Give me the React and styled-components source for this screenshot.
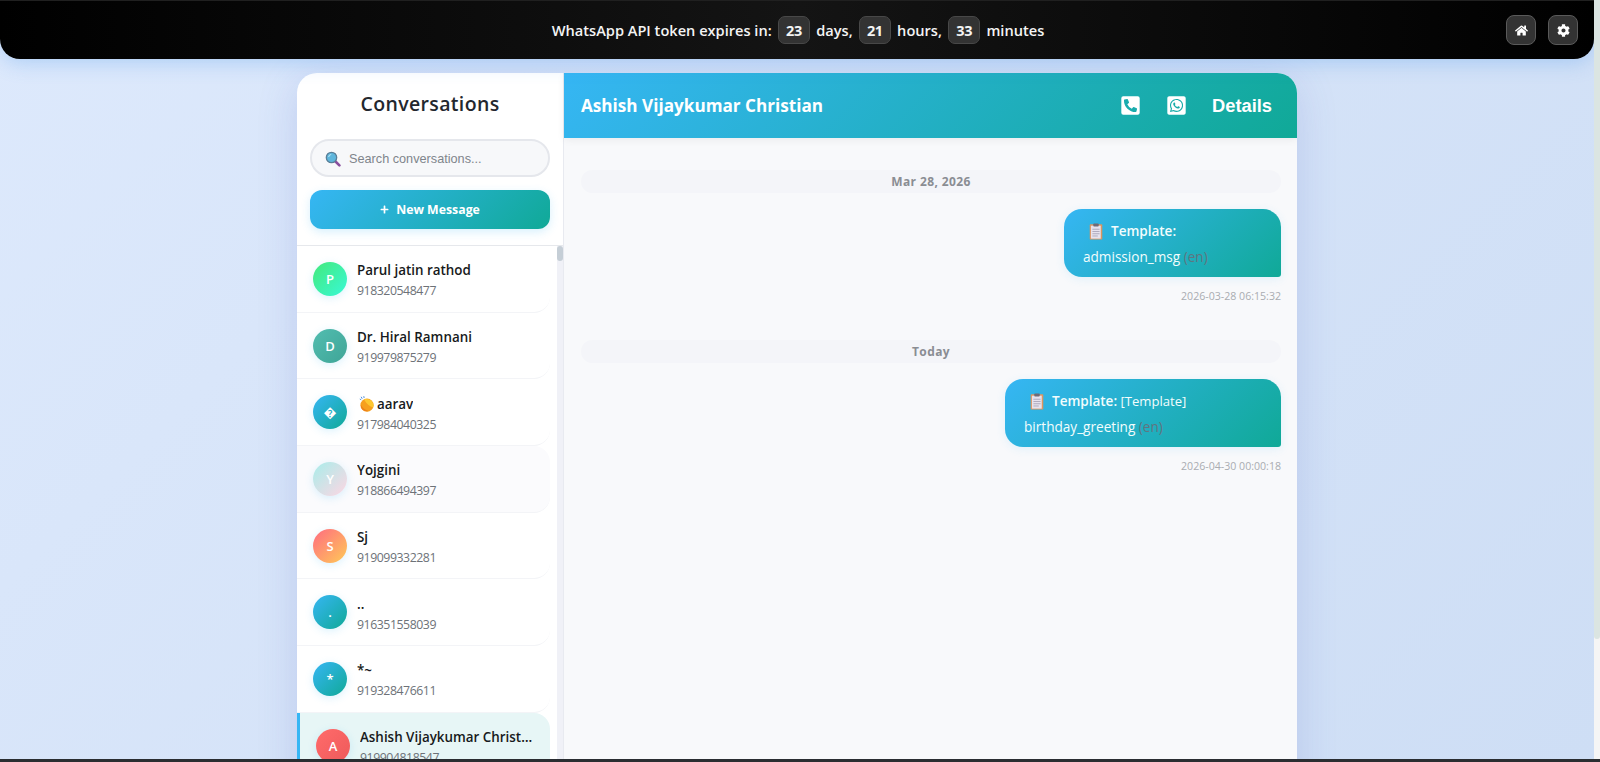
import React from "react";
import styled, { createGlobalStyle } from "styled-components";
import { FaHome, FaCog, FaPlus, FaPhoneSquareAlt, FaWhatsappSquare } from "react-icons/fa";

const GlobalStyle = createGlobalStyle`
  html, body {
    margin: 0;
    padding: 0;
    height: 100%;
    overflow: hidden;
    font-family: "Open Sans", "Noto Sans", sans-serif;
  }
  * {
    box-sizing: border-box;
  }
`;

const brand = "linear-gradient(135deg, #36b6f4 0%, #10a997 100%)";

const Screen = styled.div`
  width: 1600px;
  height: 762px;
  display: flex;
  flex-direction: column;
  overflow: hidden;
`;
const Viewport = styled.div`
  flex: 1;
  min-height: 0;
  display: flex;
`;
const TaskEdge = styled.div`
  height: 3px;
  background: #2a2d31;
`;
const Page = styled.div`
  flex: 1;
  min-width: 0;
  display: flex;
  flex-direction: column;
  overflow: hidden;
  background: linear-gradient(135deg, #dde9fc 0%, #d5e3f8 50%, #cedef5 100%);
`;
const PageRail = styled.div`
  width: 6px;
  background: #f5f5f5;
`;
const PageThumb = styled.div`
  height: 639px;
  background: #dbe5e2;
  border-radius: 0 0 3px 3px;
`;
const TopBar = styled.header`
  flex: none;
  position: relative;
  z-index: 1;
  height: 59px;
  display: grid;
  grid-template-columns: 1fr auto;
  align-items: center;
  padding: 0 16px 0 0;
  border-top: 1px solid #202020;
  border-radius: 0 0 20px 20px;
  background: linear-gradient(90deg, #000 0%, #141414 50%, #000 100%);
  box-shadow: 0 4px 20px rgba(70, 150, 235, 0.3);
  color: #f4f4f4;
`;
const Expiry = styled.div`
  display: flex;
  justify-content: center;
  align-items: center;
  gap: 6px;
  padding-left: 90px;
  font-size: 14.6px;
  font-weight: 600;
`;
const Count = styled.span`
  width: 32.5px;
  height: 28px;
  display: inline-flex;
  align-items: center;
  justify-content: center;
  border-radius: 7px;
  border: 1px solid #484848;
  background: #333;
  font-size: 14.5px;
  font-weight: 700;
  letter-spacing: -0.4px;
`;
const BarActions = styled.div`
  display: flex;
  gap: 12px;
`;
const BarButton = styled.button`
  width: 30px;
  height: 30px;
  padding: 0;
  display: flex;
  align-items: center;
  justify-content: center;
  border-radius: 8px;
  border: 1px solid #5a5a5a;
  background: #333;
  color: #fff;
  font-size: 13px;
`;
const Card = styled.main`
  flex: none;
  width: 1000px;
  height: 760px;
  margin: 14px auto 0;
  display: flex;
  overflow: hidden;
  border-radius: 20px;
  background: #fff;
  box-shadow: 0 8px 40px rgba(70, 90, 190, 0.18);
`;
const Sidebar = styled.aside`
  flex: none;
  width: 267px;
  display: flex;
  flex-direction: column;
  border-right: 1px solid #e8eaf0;
`;
const SideHead = styled.div`
  flex: none;
  height: 173px;
  padding: 16px 13px 0;
  border-bottom: 1px solid #e6e8ec;
`;
const SideTitle = styled.h2`
  margin: 0 0 20px;
  height: 30px;
  line-height: 30px;
  text-align: center;
  font-size: 19.5px;
  font-weight: 600;
  letter-spacing: 0.35px;
  color: #23272e;
`;
const SearchBox = styled.div`
  height: 38px;
  display: flex;
  align-items: center;
  gap: 8px;
  padding: 1px 13px 0;
  border: 2px solid #e5e7ec;
  border-radius: 19px;
  background: #f7f8fa;
  color: #80858c;
  font-family: "Liberation Sans", Arial, sans-serif;
  font-size: 12.7px;
`;
const NewButton = styled.button`
  width: 100%;
  height: 39px;
  margin-top: 13px;
  display: flex;
  align-items: center;
  justify-content: center;
  gap: 7px;
  border: 0;
  border-radius: 12px;
  background: ${brand};
  box-shadow: 0 3px 10px rgba(54, 182, 244, 0.2);
  color: #fff;
  font-family: "Open Sans", sans-serif;
  font-size: 12.3px;
  font-weight: 700;
`;
const ListWrap = styled.div`
  flex: 1;
  min-height: 0;
  display: flex;
`;
const List = styled.div`
  flex: 1;
  min-width: 0;
  padding-right: 7px;
  overflow: hidden;
`;
const ListRail = styled.div`
  flex: none;
  width: 6px;
  background: #f0f1f7;
`;
const ListThumb = styled.div`
  height: 15px;
  background: #c5ced6;
  border-radius: 3px;
`;
const Row = styled.div`
  height: 66.7px;
  display: flex;
  align-items: center;
  gap: 10px;
  padding-left: 16px;
  border-left: ${p => (p.$active ? "3px solid #36b6f4" : "0")};
  border-bottom: 1px solid #f3f4f7;
  border-radius: 0 16px 16px 0;
  background: ${p => (p.$active ? "#e7f6f6" : p.$soft ? "#fbfbfd" : "#fff")};
`;
const Avatar = styled.div`
  flex: none;
  width: 34px;
  height: 34px;
  display: flex;
  align-items: center;
  justify-content: center;
  border-radius: 50%;
  background: ${p => p.$bg};
  box-shadow: 0 2px 8px rgba(54, 182, 244, 0.18);
  color: #fff;
  font-size: 13px;
  font-weight: 600;
`;
const RowText = styled.div`
  min-width: 0;
  flex: 1;
  padding-right: 17px;
  padding-top: 3px;
`;
const Name = styled.div`
  display: flex;
  align-items: center;
  gap: 2px;
  height: 20px;
  line-height: 20px;
  font-size: 13.4px;
  font-weight: 600;
  color: #171a20;
  white-space: nowrap;
`;
const NameText = styled.span`
  overflow: hidden;
  text-overflow: ellipsis;
`;
const Phone = styled.div`
  margin-top: 2px;
  line-height: 18px;
  font-size: 12.3px;
  letter-spacing: -0.45px;
  color: #6d7278;
`;
const Chat = styled.section`
  flex: 1;
  min-width: 0;
  display: flex;
  flex-direction: column;
  background: #f8f9fb;
`;
const ChatHead = styled.div`
  flex: none;
  height: 65px;
  display: flex;
  align-items: center;
  padding: 0 25px 0 17px;
  background: ${brand};
  box-shadow: 0 2px 8px rgba(0, 0, 0, 0.06);
  color: #fff;
`;
const ChatName = styled.h3`
  flex: 1;
  margin: 0;
  font-size: 17.15px;
  font-weight: 700;
`;
const HeadIcon = styled.span`
  display: flex;
  margin-right: ${p => p.$gap}px;
  font-size: 21px;
`;
const Details = styled.span`
  font-family: "Liberation Sans", Arial, sans-serif;
  font-size: 18.3px;
  font-weight: 700;
`;
const Thread = styled.div`
  flex: 1;
  padding: 32px 16px 0 17px;
  display: flex;
  flex-direction: column;
  align-items: flex-end;
`;
const DateBar = styled.div`
  align-self: stretch;
  height: 23px;
  line-height: 23px;
  text-align: center;
  border-radius: 12px;
  background: #f4f5f9;
  color: #8a8d93;
  font-size: 12px;
  font-weight: 700;
  letter-spacing: 0.4px;
  margin-top: ${p => p.$gap || 0}px;
`;
const Bubble = styled.div`
  width: ${p => p.$width}px;
  height: 68px;
  margin-top: 16px;
  padding: 10px 0 0 19px;
  border-radius: 18px 18px 3px 18px;
  background: ${brand};
  box-shadow: 0 2px 10px rgba(54, 182, 244, 0.12);
  color: #f2fdfd;
  font-size: 13.6px;
  line-height: 25px;
`;
const TemplateLine = styled.div`
  display: flex;
  align-items: center;
  gap: 8px;
  padding-left: 6px;
  font-size: 13.1px;
`;
const Strong = styled.strong`
  font-size: 13.5px;
  font-weight: 600;
`;
const Lang = styled.span`
  color: #607580;
`;
const Stamp = styled.div`
  margin-top: 11px;
  line-height: 16px;
  font-size: 10.6px;
  color: #a9acb1;
`;

const SearchGlyph = () => (
  <svg width="16" height="16" viewBox="0 0 16 16">
    <path d="M10 10l4.4 4.4" stroke="#8a4f9e" strokeWidth="2.6" strokeLinecap="round" />
    <circle cx="6.5" cy="6.5" r="5.2" fill="#5fb6dc" stroke="#5a7f98" strokeWidth="1.3" />
    <path d="M3.6 6a3 3 0 0 1 2.6-2.5" stroke="#b9e6f5" strokeWidth="1.1" fill="none" />
  </svg>
);
const Clap = () => (
  <svg width="18" height="18" viewBox="0 0 18 18">
    <path d="M4.2 1.8l1 2M6.8 1.2l.3 1.8M2.8 4l1.4.8" stroke="#4f8fdc" strokeWidth="1" />
    <circle cx="10" cy="10.2" r="6.6" fill="#f6a01e" />
    <path d="M7 4.6c3-1.4 7.4.2 9 3.4.8 1.8.6 3.4 0 4.6-3-1-6-3-9-8z" fill="#fdc730" />
    <path d="M4 10c1.4 3 4 5 7.6 6-2.8.8-6-.4-7.2-3-.4-1-.6-2-.4-3z" fill="#ec7f1c" />
  </svg>
);
const Clipboard = () => (
  <svg width="14" height="17" viewBox="0 0 15 19">
    <rect x="0.5" y="1.5" width="14" height="17" rx="1" fill="#dd955f" />
    <rect x="1.8" y="3" width="11" height="14.5" fill="#e6e2ee" />
    <path d="M3.5 7h8M3.5 9.5h8M3.5 12h8M3.5 14.5h6" stroke="#a9a4b8" strokeWidth="1" />
    <rect x="4.5" y="0.5" width="6" height="3.5" rx="0.8" fill="#6f6a78" />
  </svg>
);

const contacts = [
  { name: "Parul jatin rathod", phone: "918320548477", letter: "P", bg: "linear-gradient(135deg, #43e97b, #38f9d7)" },
  { name: "Dr. Hiral Ramnani", phone: "919979875279", letter: "D", bg: "linear-gradient(135deg, #52bdb0, #3fa597)" },
  { name: "aarav", phone: "917984040325", letter: "\uFFFD", bg: brand, clap: true },
  { name: "Yojgini", phone: "918866494397", letter: "Y", bg: "linear-gradient(135deg, #a8edea, #fed6e3)", soft: true },
  { name: "Sj", phone: "919099332281", letter: "S", bg: "linear-gradient(135deg, #ff6b81, #feca57)" },
  { name: "..", phone: "916351558039", letter: ".", bg: brand },
  { name: "*~", phone: "919328476611", letter: "*", bg: brand },
  { name: "Ashish Vijaykumar Christian", phone: "919904818547", letter: "A", bg: "linear-gradient(135deg, #ff6b6b, #ee5a5a)", active: true },
];

export default function App() {
  return (
    <Screen>
      <GlobalStyle />
      <Viewport>
        <Page>
          <TopBar>
            <Expiry>
              WhatsApp API token expires in: <Count>23</Count> days, <Count>21</Count> hours, <Count>33</Count> minutes
            </Expiry>
            <BarActions>
              <BarButton><FaHome /></BarButton>
              <BarButton><FaCog /></BarButton>
            </BarActions>
          </TopBar>
          <Card>
            <Sidebar>
              <SideHead>
                <SideTitle>Conversations</SideTitle>
                <SearchBox>
                  <SearchGlyph />
                  Search conversations...
                </SearchBox>
                <NewButton><FaPlus size={9} /> New Message</NewButton>
              </SideHead>
              <ListWrap>
                <List>
                  {contacts.map(c => (
                    <Row key={c.phone} $active={c.active} $soft={c.soft}>
                      <Avatar $bg={c.bg}>{c.letter}</Avatar>
                      <RowText>
                        <Name>
                          {c.clap ? <Clap /> : null}
                          <NameText>{c.name}</NameText>
                        </Name>
                        <Phone>{c.phone}</Phone>
                      </RowText>
                    </Row>
                  ))}
                </List>
                <ListRail><ListThumb /></ListRail>
              </ListWrap>
            </Sidebar>
            <Chat>
              <ChatHead>
                <ChatName>Ashish Vijaykumar Christian</ChatName>
                <HeadIcon $gap={24.5}><FaPhoneSquareAlt /></HeadIcon>
                <HeadIcon $gap={25.5}><FaWhatsappSquare /></HeadIcon>
                <Details>Details</Details>
              </ChatHead>
              <Thread>
                <DateBar>Mar 28, 2026</DateBar>
                <Bubble $width={217}>
                  <TemplateLine><Clipboard /><span><Strong>Template:</Strong></span></TemplateLine>
                  admission_msg <Lang>(en)</Lang>
                </Bubble>
                <Stamp>2026-03-28 06:15:32</Stamp>
                <DateBar $gap={36}>Today</DateBar>
                <Bubble $width={276}>
                  <TemplateLine><Clipboard /><span><Strong>Template:</Strong> [Template]</span></TemplateLine>
                  birthday_greeting <Lang>(en)</Lang>
                </Bubble>
                <Stamp>2026-04-30 00:00:18</Stamp>
              </Thread>
            </Chat>
          </Card>
        </Page>
        <PageRail><PageThumb /></PageRail>
      </Viewport>
      <TaskEdge />
    </Screen>
  );
}
